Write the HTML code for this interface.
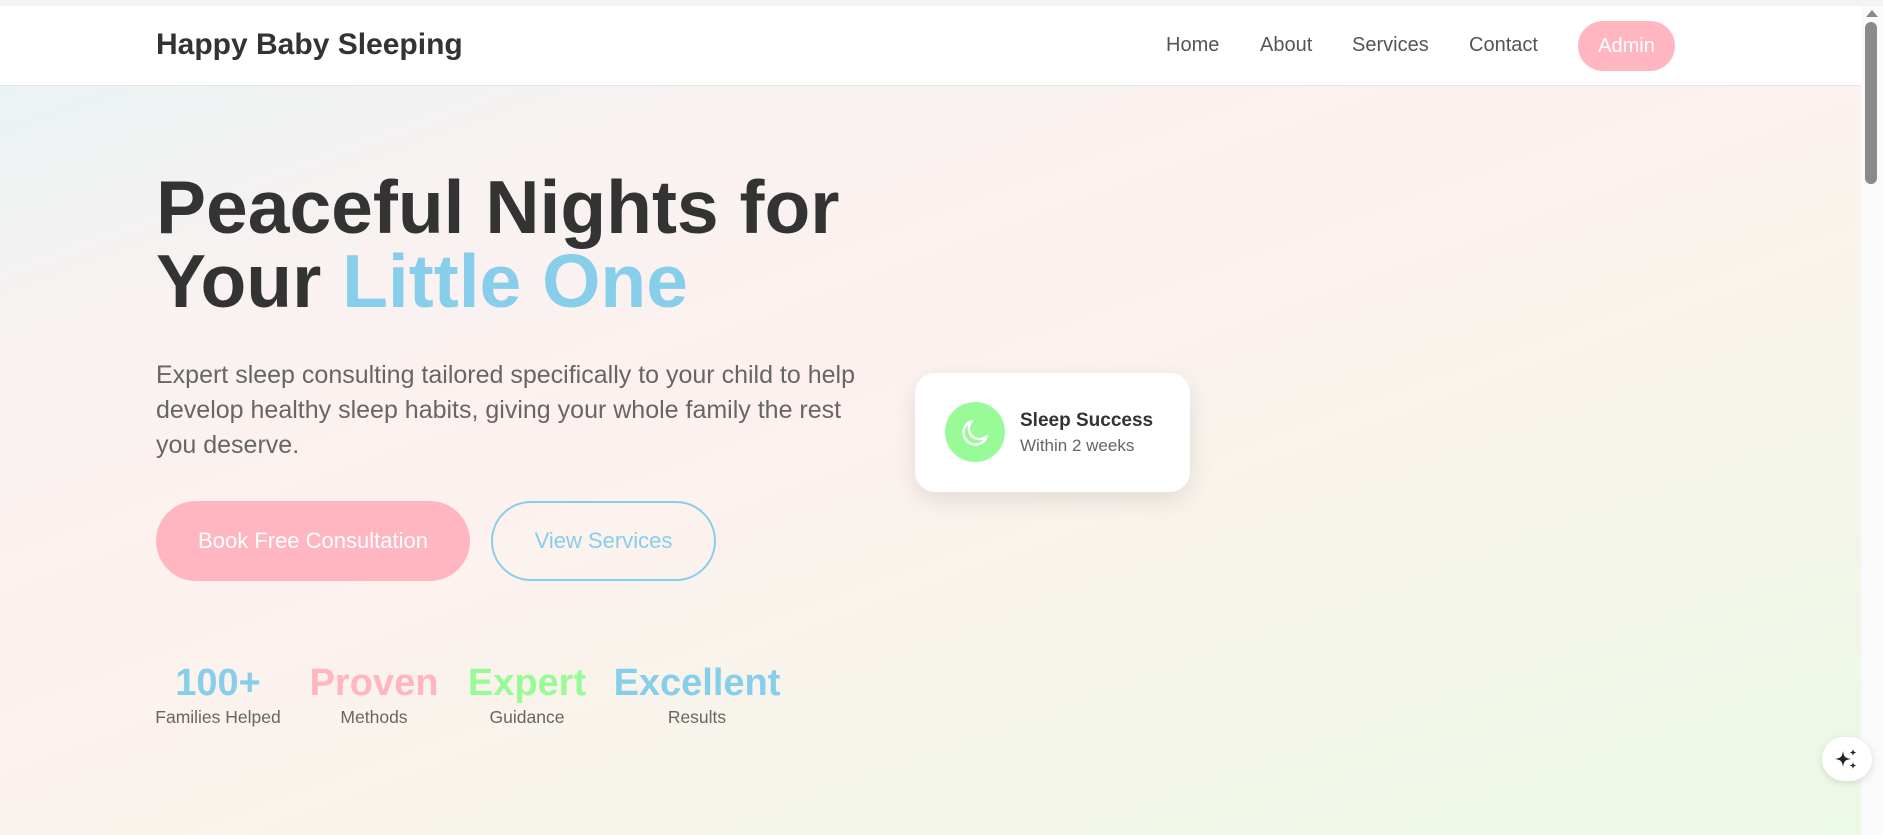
<!DOCTYPE html>
<html><head><meta charset="utf-8"><style>
*{margin:0;padding:0;box-sizing:border-box}
body{width:1883px;height:835px;overflow:hidden;font-family:"Liberation Sans",sans-serif;background:#f3f3f3;position:relative}
.page{position:absolute;left:0;top:6px;width:1861px;height:829px;background:linear-gradient(160deg,#e6f3f5 0%,#f9f2f0 25%,#fdf1ef 45%,#f6f5ea 70%,#ecf9e5 100%)}
header{position:absolute;left:0;top:0;width:1861px;height:80px;background:#fff;border-bottom:1px solid #e6e6e6}
.logo{position:absolute;left:156px;top:22px;font-size:30px;font-weight:bold;color:#333}
nav a{position:absolute;top:28px;font-size:20px;color:#555;text-decoration:none}
.admin{position:absolute;left:1578px;top:15px;width:97px;height:50px;border-radius:25px;background:#ffb6c1;color:#fff;font-size:20px;text-align:center;line-height:50px}
h1{position:absolute;left:156px;top:164px;font-size:75px;line-height:74px;color:#333;font-weight:bold;white-space:nowrap}
h1 span{color:#87ceeb}
.p{position:absolute;left:156px;top:352px;width:715px;font-size:25px;line-height:35px;color:#666}
.b1{position:absolute;left:156px;top:495px;width:314px;height:80px;border-radius:40px;background:#ffb6c1;color:#fff;font-size:22px;text-align:center;line-height:80px}
.b2{position:absolute;left:491px;top:495px;width:225px;height:80px;border-radius:40px;border:2px solid #87ceeb;color:#87ceeb;font-size:22px;text-align:center;line-height:76px}
.st{position:absolute;top:654px;text-align:center;transform:translateX(-50%);white-space:nowrap}
.st b{display:block;font-size:38px;line-height:46px}
.st i{display:block;font-style:normal;font-size:17.5px;color:#666;line-height:24px;margin-top:-1px}
.card{position:absolute;left:915px;top:367px;width:275px;height:119px;background:#fff;border-radius:20px;box-shadow:0 8px 24px rgba(0,0,0,.1)}
.ic{position:absolute;left:30px;top:29px;width:60px;height:60px;border-radius:50%;background:#98fb98}
.t1{position:absolute;left:105px;top:37px;font-size:19px;font-weight:bold;color:#333}
.t2{position:absolute;left:105px;top:63px;font-size:17px;color:#666}
.sb{position:absolute;left:1861px;top:6px;width:22px;height:829px;background:#fafafa}
.thumb{position:absolute;left:4px;top:16px;width:12px;height:162px;background:#8a8a8a;border-radius:6px}
.sp{position:absolute;left:1822px;top:737px;width:50px;height:44px;border-radius:22px;background:#fff;box-shadow:0 2px 8px rgba(0,0,0,.12)}
</style></head><body>
<div class="page">
<header><div class="logo">Happy Baby Sleeping</div>
<nav><a style="left:1166px">Home</a><a style="left:1260px">About</a><a style="left:1352px">Services</a><a style="left:1469px">Contact</a></nav>
<div class="admin">Admin</div></header>
<h1>Peaceful Nights for<br>Your <span>Little One</span></h1>
<div class="p">Expert sleep consulting tailored specifically to your child to help develop healthy sleep habits, giving your whole family the rest you deserve.</div>
<div class="b1">Book Free Consultation</div>
<div class="b2">View Services</div>
<div class="st" style="left:218px"><b style="color:#87ceeb">100+</b><i>Families Helped</i></div>
<div class="st" style="left:374px"><b style="color:#ffb6c1">Proven</b><i>Methods</i></div>
<div class="st" style="left:527px"><b style="color:#98fb98">Expert</b><i>Guidance</i></div>
<div class="st" style="left:697px"><b style="color:#87ceeb">Excellent</b><i>Results</i></div>
<div class="card"><div class="ic"><svg width="60" height="60" viewBox="0 0 60 60"><path d="M27 19a12 12 0 1 0 15 15a10 10 0 0 1-15-15z" fill="none" stroke="#fff" stroke-width="2.5" stroke-linejoin="round"/></svg></div>
<div class="t1">Sleep Success</div><div class="t2">Within 2 weeks</div></div>
</div>
<div class="sb"><svg style="position:absolute;left:5px;top:4px" width="12" height="8"><path d="M0 7L6 0L12 7z" fill="#888"/></svg><div class="thumb"></div></div>
<div class="sp"><svg style="position:absolute;left:12px;top:10px" width="26" height="24" viewBox="0 0 26 24"><path d="M9 4C10 10 11 11 17 12C11 13 10 14 9 20C8 14 7 13 1 12C7 11 8 10 9 4z" fill="#222"/><path d="M19 2C19.5 4.5 20 5 22.5 5.5C20 6 19.5 6.5 19 9C18.5 6.5 18 6 15.5 5.5C18 5 18.5 4.5 19 2z" fill="#222"/><path d="M19 15C19.5 17.5 20 18 22.5 18.5C20 19 19.5 19.5 19 22C18.5 19.5 18 19 15.5 18.5C18 18 18.5 17.5 19 15z" fill="#222"/></svg></div>
</body></html>
